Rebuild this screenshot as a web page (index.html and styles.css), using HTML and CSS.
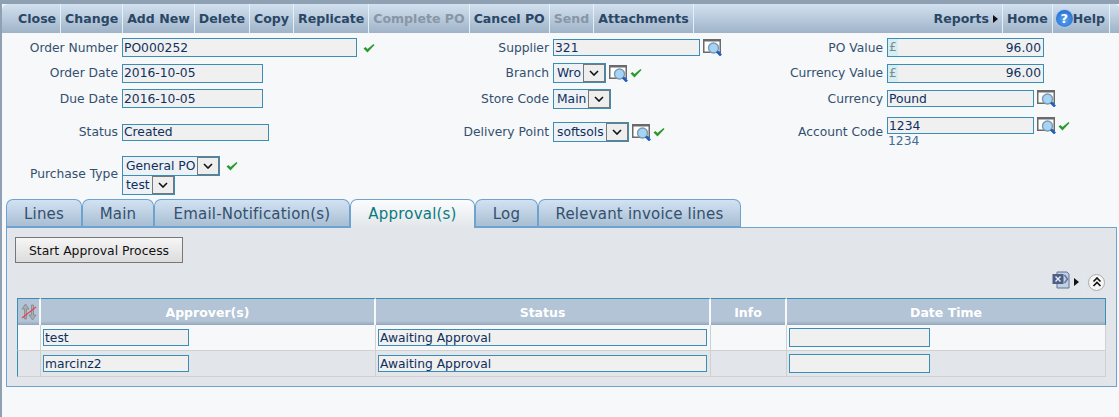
FILE: index.html
```html
<!DOCTYPE html>
<html lang="en">
<head>
    <meta charset="UTF-8">
    <title>Purchase Order</title>
    <link rel="stylesheet" href="styles.css">
</head>
<body>
    <svg class="defs" width="0" height="0">
        <symbol id="find" viewBox="0 0 19 17">
            <path d="M0.75 0.75h16.5v12.5h-16.5z" fill="#fff" stroke="#6a6a6a" stroke-width="1.5"/>
            <path d="M0 0h18v2.5h-18z" fill="#6a6a6a"/>
            <circle cx="10.5" cy="9" r="5" fill="#a6d4f4" stroke="#7d99b0" stroke-width="1.4"/>
            <path d="M14 12.5l4 4" stroke="#1c5fc4" stroke-width="2.6"/>
        </symbol>
        <symbol id="tick" viewBox="0 0 12 10">
            <path d="M0.5 5.5l2-1.5l2 2l6-5l1 1l-7 7.500z" fill="#2a9a2f"/>
        </symbol>
        <symbol id="chev" viewBox="0 0 10 6">
            <path d="M1 1l4 4l4-4" fill="none" stroke="#111" stroke-width="1.6"/>
        </symbol>
    </svg>

    <div class="toolbar">
        <a class="tool first">Close</a>
        <a class="tool">Change</a>
        <a class="tool">Add New</a>
        <a class="tool">Delete</a>
        <a class="tool">Copy</a>
        <a class="tool">Replicate</a>
        <a class="tool off">Complete PO</a>
        <a class="tool">Cancel PO</a>
        <a class="tool off">Send</a>
        <a class="tool">Attachments</a>
        <a class="tool push">Reports<i class="caret"></i></a>
        <a class="tool">Home</a>
        <a class="tool help"><span class="help-ico">?</span>Help</a>
    </div>

    <form class="order-form" autocomplete="off">
        <label>Order Number</label>
        <div class="ctrl"><input class="w235" type="text" value="PO000252" readonly><svg class="tick gap6"><use href="#tick"/></svg></div>
        <label>Supplier</label>
        <div class="ctrl"><input class="w147 short" type="text" value="321" readonly><svg class="find"><use href="#find"/></svg></div>
        <label>PO Value</label>
        <div class="ctrl"><div class="money"><span class="cur">£</span><span>96.00</span></div></div>

        <label>Order Date</label>
        <div class="ctrl"><input class="w141" type="text" value="2016-10-05" readonly></div>
        <label>Branch</label>
        <div class="ctrl"><div class="combo"><span>Wro</span><b class="combo-btn"><svg><use href="#chev"/></svg></b></div><svg class="find"><use href="#find"/></svg><svg class="tick"><use href="#tick"/></svg></div>
        <label>Currency Value</label>
        <div class="ctrl"><div class="money"><span class="cur">£</span><span>96.00</span></div></div>

        <label>Due Date</label>
        <div class="ctrl"><input class="w141" type="text" value="2016-10-05" readonly></div>
        <label>Store Code</label>
        <div class="ctrl"><div class="combo"><span>Main</span><b class="combo-btn"><svg><use href="#chev"/></svg></b></div></div>
        <label>Currency</label>
        <div class="ctrl"><input class="w147 short" type="text" value="Pound" readonly><svg class="find"><use href="#find"/></svg></div>

        <label>Status</label>
        <div class="ctrl"><input class="w147 short" type="text" value="Created" readonly></div>
        <label>Delivery Point</label>
        <div class="ctrl"><div class="combo"><span>softsols</span><b class="combo-btn"><svg><use href="#chev"/></svg></b></div><svg class="find"><use href="#find"/></svg><svg class="tick"><use href="#tick"/></svg></div>
        <label>Account Code</label>
        <div class="ctrl-stack">
            <div class="ctrl"><input class="w147 short" type="text" value="1234" readonly><svg class="find"><use href="#find"/></svg><svg class="tick"><use href="#tick"/></svg></div>
            <div class="hint">1234</div>
        </div>

        <label>Purchase Type</label>
        <div class="ctrl-col">
            <div class="ctrl"><div class="combo"><span>General PO</span><b class="combo-btn"><svg><use href="#chev"/></svg></b></div><svg class="tick gap6"><use href="#tick"/></svg></div>
            <div class="combo"><span>test</span><b class="combo-btn"><svg><use href="#chev"/></svg></b></div>
        </div>
    </form>

    <div class="tabs">
        <a class="tab t-lines">Lines</a>
        <a class="tab t-main">Main</a>
        <a class="tab t-email">Email-Notification(s)</a>
        <a class="tab active t-appr">Approval(s)</a>
        <a class="tab t-log">Log</a>
        <a class="tab t-inv">Relevant invoice lines</a>
    </div>

    <div class="panel">
        <button class="btn" type="button">Start Approval Process</button>
        <div class="grid-tools">
            <svg class="xls" viewBox="0 0 18 18" width="18" height="18">
                <path d="M5 1h10l2 2v14H5z" fill="#c3d0e4" stroke="#5f7399"/>
                <path d="M0.500 3h11v10h-11z" fill="#4d5f84"/>
                <path d="M3.500 5.500l5 5M8.500 5.500l-5 5" stroke="#e8eef6" stroke-width="1.400"/>
                <path d="M12.500 4l3 4l-3 4" fill="none" stroke="#5f7399" stroke-width="1.400"/>
            </svg>
            <i class="caret"></i>
            <span class="grid-sep"></span>
            <span class="collapse">
                <svg viewBox="0 0 10 10" width="10" height="10"><path d="M1.500 4.500l3.500-3.500l3.500 3.500M1.500 9l3.500-3.500l3.500 3.500" fill="none" stroke="#111" stroke-width="1.600"/></svg>
            </span>
        </div>
        <table class="grid">
            <colgroup>
                <col class="c-sort"><col class="c-appr"><col class="c-status"><col class="c-info"><col>
            </colgroup>
            <thead>
                <tr>
                    <th class="sort">
                        <svg viewBox="0 0 16 18" width="16" height="18">
                            <path d="M4.500 1l3.500 5h-2.500v10h-2v-10h-2.500zM11.500 17l-3.500-5h2.500v-10h2v10h2.500z" fill="#a9adb2" stroke="#7c8085" stroke-width="0.700"/>
                            <path d="M1 15l14-11" stroke="#f0404a" stroke-width="1.300"/>
                        </svg>
                    </th>
                    <th>Approver(s)</th>
                    <th>Status</th>
                    <th>Info</th>
                    <th>Date Time</th>
                </tr>
            </thead>
            <tbody>
                <tr>
                    <td></td>
                    <td><input class="cell-name" type="text" value="test" readonly></td>
                    <td><input class="cell-status" type="text" value="Awaiting Approval" readonly></td>
                    <td></td>
                    <td><input class="cell-date" type="text" readonly></td>
                </tr>
                <tr class="alt">
                    <td></td>
                    <td><input class="cell-name" type="text" value="marcinz2" readonly></td>
                    <td><input class="cell-status" type="text" value="Awaiting Approval" readonly></td>
                    <td></td>
                    <td><input class="cell-date" type="text" readonly></td>
                </tr>
            </tbody>
        </table>
    </div>
</body>
</html>
```

FILE: styles.css
```css
body {
    margin: 0;
    box-sizing: border-box;
    height: 417px;
    overflow: hidden;
    font-family: "DejaVu Sans", Verdana, sans-serif;
    font-size: 12.3px;
    color: #34506e;
    background-color: #f6f8fa;
    border-top: 4px solid #8fa0b3;
    border-left: 2px solid #8fa0b3;
}
.defs {
    position: absolute;
}

/* top toolbar */
.toolbar {
    display: flex;
    height: 29px;
    background: linear-gradient(#d2e1f0, #9fb3c8);
    border-top-left-radius: 6px;
    border-top-right-radius: 4px;
    font-size: 12.55px;
    font-weight: bold;
    color: #2a4766;
}
.tool {
    display: flex;
    align-items: center;
    padding: 0 4px;
    border-right: 1px solid #e4f0f6;
}
.tool.first {
    padding-left: 16px;
}
.tool.off {
    color: #8896a5;
}
.tool.push {
    margin-left: auto;
}
.tool.help {
    padding-left: 3px;
    margin-right: 9px;
}
.caret {
    display: inline-block;
    margin-left: 4px;
    border-left: 5px solid #111;
    border-top: 4px solid transparent;
    border-bottom: 4px solid transparent;
}
.help-ico {
    width: 17px;
    height: 17px;
    border-radius: 50%;
    text-align: center;
    font-size: 13px;
    line-height: 17px;
    color: #fff;
    background: radial-gradient(circle at 50% 60%, #5aa2ee, #1a62c8);
    box-shadow: 0 0 0 1px #a9c8ea;
}

/* header form */
.order-form {
    display: grid;
    grid-template-columns: 116px 278px 145px 197px 129px 1fr;
    grid-template-rows: 25px 26px 25px 42px 42px;
    column-gap: 4px;
    padding-top: 2px;
    padding-bottom: 5px;
    align-items: center;
}
.order-form label {
    text-align: right;
}
.ctrl {
    display: flex;
    align-items: center;
}
.ctrl-col {
    display: flex;
    flex-direction: column;
    align-items: flex-start;
    align-self: start;
    margin-top: 3px;
}
.ctrl-col .combo {
    margin-bottom: -1px;
}
.ctrl-stack {
    align-self: start;
    padding-top: 6px;
}
.hint {
    padding-left: 1px;
    line-height: 14px;
    color: #3f6c98;
}
input {
    box-sizing: border-box;
    height: 19px;
    padding: 0 1px;
    border: 1px solid #3a8db5;
    background-color: #f0f0f0;
    font-family: "DejaVu Sans", Verdana, sans-serif;
    font-size: 12.3px;
    color: #0f2f5c;
    outline: none;
}
input.short {
    height: 17px;
}
.w235 { width: 235px; }
.w141 { width: 141px; }
.w147 { width: 147px; }
.money {
    box-sizing: border-box;
    display: flex;
    justify-content: space-between;
    align-items: center;
    width: 157px;
    height: 19px;
    padding-right: 2px;
    border: 1px solid #3a8db5;
    background-color: #f0f0f0;
    color: #0f2f5c;
}
.cur {
    padding: 0 1px;
    align-self: stretch;
    line-height: 17px;
    color: #7f8a8e;
    background-color: #d4eef2;
}
.combo {
    box-sizing: border-box;
    display: inline-flex;
    align-items: stretch;
    height: 20px;
    padding-left: 3px;
    border: 1px solid #3a8db5;
    background-color: #eef2f6;
    color: #0f2f5c;
    line-height: 18px;
}
.combo-btn {
    display: flex;
    align-items: center;
    justify-content: center;
    width: 20px;
    margin-left: 2px;
    border: 1px solid #777;
    background-color: #eee;
}
.combo-btn svg {
    width: 10px;
    height: 6px;
}
.find {
    width: 19px;
    height: 17px;
    margin-left: 3px;
}
.tick {
    width: 12px;
    height: 10px;
    margin-left: 2px;
}
.tick.gap6 {
    margin-left: 6px;
}

/* tabs */
.tabs {
    display: flex;
    align-items: flex-end;
    height: 28px;
    margin-left: 4px;
    margin-top: -1px;
    font-size: 15px;
    letter-spacing: 0.2px;
}
.tab {
    box-sizing: border-box;
    height: 29px;
    margin-bottom: -1px;
    border: 1px solid #6ea3cf;
    border-bottom-width: 2px;
    border-radius: 7px 7px 0 0;
    text-align: center;
    line-height: 28px;
    background: linear-gradient(#d2e2f2, #a9bed3);
}
.tab.active {
    position: relative;
    border-bottom: none;
    color: #0a7a80;
    background: linear-gradient(#fbfcfd, #e2e6ea);
}
.t-lines { width: 76px; }
.t-main { width: 72px; }
.t-email { width: 196px; }
.t-appr { width: 125px; }
.t-log { width: 63px; }
.t-inv { width: 203px; }

/* approval panel */
.panel {
    box-sizing: border-box;
    height: 160px;
    margin: 0 2px 0 4px;
    padding: 9px 10px 0 8px;
    border: 1px solid #6ea3cf;
    background-color: #e2e6ea;
}
.btn {
    display: block;
    width: 168px;
    height: 26px;
    padding: 0;
    border: 1px solid #777;
    background: linear-gradient(#f6f6f6, #dcdcdc);
    font-family: "DejaVu Sans", Verdana, sans-serif;
    font-size: 12.4px;
    color: #111;
}
.grid-tools {
    display: flex;
    align-items: center;
    justify-content: flex-end;
    height: 35px;
    padding-right: 1px;
    padding-top: 3px;
    box-sizing: border-box;
}
.grid-sep {
    width: 1px;
    height: 22px;
    margin: 0 3px 0 5px;
    background-color: #dcecf2;
}
.collapse {
    box-sizing: border-box;
    display: flex;
    align-items: center;
    justify-content: center;
    width: 17px;
    height: 17px;
    border: 1px solid #aaa;
    border-radius: 50%;
    background-color: #f6f6f6;
}
.xls {
    margin-top: -4px;
}
.grid {
    width: 1089px;
    margin-left: 2px;
    table-layout: fixed;
    border-collapse: separate;
    border-spacing: 0;
}
.c-sort { width: 24px; }
.c-appr { width: 335px; }
.c-status { width: 335px; }
.c-info { width: 76px; }
.grid th {
    box-sizing: border-box;
    height: 27px;
    padding: 0;
    border-top: 1px solid #3a8db5;
    border-right: 2px solid #f6f8fa;
    background: linear-gradient(#b3c4d6 85%, #93a5b9);
    font-size: 12.5px;
    color: #fff;
}
.grid th:first-child {
    border-left: 1px solid #3a8db5;
}
.grid th:last-child {
    border-right: 1px solid #3a8db5;
}
.grid th svg {
    display: block;
    margin: 0 auto;
}
.grid td {
    box-sizing: border-box;
    height: 26px;
    padding: 0 0 0 2px;
    border-right: 1px solid #d0d0d0;
    border-bottom: 1px solid #d0d0d0;
    background-color: #f6f8fa;
}
.grid td:first-child {
    border-left: 1px solid #3a8db5;
}
.grid tr.alt td {
    background-color: #e2e6ea;
}
.grid input {
    display: block;
}
.cell-name {
    width: 146px;
    height: 17px;
}
.cell-status {
    width: 329px;
    height: 17px;
}
.cell-date {
    width: 141px;
}
```
